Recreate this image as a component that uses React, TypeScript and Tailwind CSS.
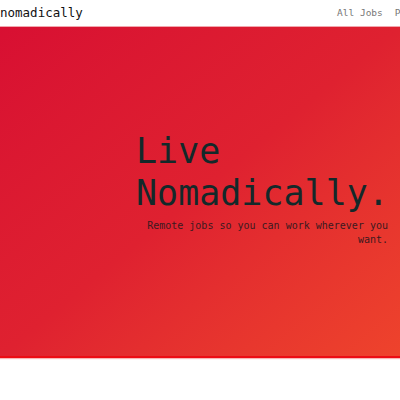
import React from 'react';

const mono = { fontFamily: '"DejaVu Sans Mono", "Liberation Mono", monospace' };

const Navbar: React.FC = () => {
  return (
    <nav className="h-[26px] flex items-center justify-between overflow-hidden whitespace-nowrap" style={mono}>
      <div className="text-[12.5px] text-[#111] leading-none">nomadically</div>
      <div className="flex items-center gap-[12px] text-[9.5px] text-[#777] mr-[-52px] shrink-0">
        <a href="#">All Jobs</a>
        <a href="#">Post a Job</a>
      </div>
    </nav>
  );
};

const Hero: React.FC = () => {
  return (
    <section className="h-[332px] border-t border-t-[#f2a7ae] border-b-2 border-b-[#ec0c14] bg-gradient-to-br from-[#d80f32] via-[#df2130] to-[#ee432c] flex items-center pl-[136px] shadow-[0_1px_1px_#f7b5b5]">
      <div className="w-[252px] mt-[-6px]" style={mono}>
        <h1 className="text-[35px] leading-[42px] text-[#13292a]">
          Live
          <br />
          Nomadically.
        </h1>
        <p className="mt-[5px] text-[10px] leading-[14px] text-right text-[#3b1a20]">
          Remote jobs so you can work wherever you want.
        </p>
      </div>
    </section>
  );
};

export default function App() {
  return (
    <div className="w-[400px] h-[400px] overflow-hidden bg-white">
      <Navbar />
      <Hero />
    </div>
  );
}
